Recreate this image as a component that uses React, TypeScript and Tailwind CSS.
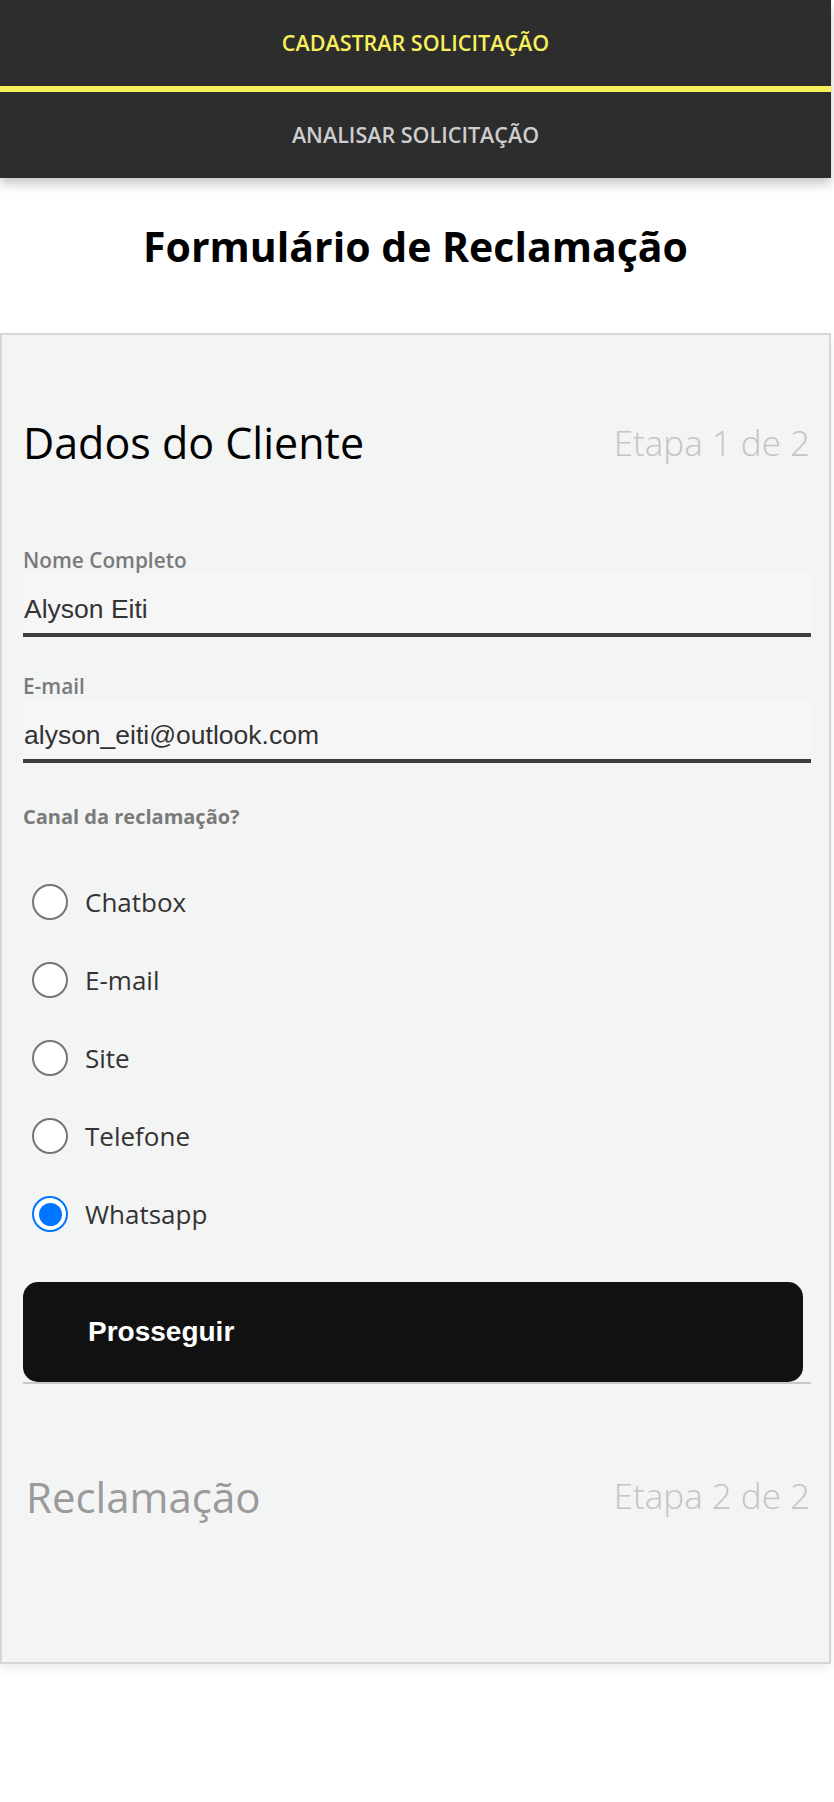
import React, { useState } from 'react';

const canais = ['Chatbox', 'E-mail', 'Site', 'Telefone', 'Whatsapp'];

const sans = { fontFamily: '"Open Sans", "Noto Sans", sans-serif' };
const arial = { fontFamily: '"Liberation Sans", Arial, sans-serif' };

const Radio: React.FC<{ checked: boolean }> = ({ checked }) =>
    checked ? (
        <span className="w-9 h-9 rounded-full border-2 border-[#0075ff] bg-white flex items-center justify-center shrink-0">
            <span className="w-[23px] h-[23px] rounded-full bg-[#0075ff]" />
        </span>
    ) : (
        <span className="w-9 h-9 rounded-full border-2 border-[#767676] bg-white shrink-0" />
    );

export default function App() {
    const [canal, setCanal] = useState('Whatsapp');

    return (
        <div className="w-[831px] bg-white pb-[138px] font-['Open_Sans',sans-serif]">
            <nav className="bg-[#2d2d2d] shadow-[0_6px_10px_rgba(0,0,0,0.22)]">
                <div className="h-[92px] border-b-[6px] border-[#f8f05a] flex items-center justify-center">
                    <span className="text-[21.5px] font-semibold text-[#f8f05a]">CADASTRAR SOLICITAÇÃO</span>
                </div>
                <div className="h-[86px] flex items-center justify-center">
                    <span className="text-[21.5px] font-semibold text-[#cdcdd0]">ANALISAR SOLICITAÇÃO</span>
                </div>
            </nav>

            <h1 className="mt-[43px] text-center text-[41px] leading-[50px] font-bold text-black">Formulário de Reclamação</h1>

            <section className="mt-[62px] border-2 border-[#d6d6d6] bg-[#f3f4f4] shadow-[0_4px_10px_rgba(0,0,0,0.08)] pl-[21px] pr-[19px] pt-[80px] pb-[138px]">
                <div className="h-[56px] flex items-center justify-between">
                    <h2 className="text-[43px] text-black">Dados do Cliente</h2>
                    <span className="text-[35px] font-[350] text-[#c4c4c4]">Etapa 1 de 2</span>
                </div>

                <label className="block mt-[76px] text-[20.8px] leading-[26px] font-semibold text-[#7a7a7a]">Nome Completo</label>
                <input
                    defaultValue="Alyson Eiti"
                    className="block w-[788px] h-[64px] bg-[#f6f6f6] border-b-4 border-[#3d3d3d] px-px pt-[13px] text-[26.5px] text-[#333] outline-none"
                    style={arial}
                />

                <label className="block mt-[36px] text-[20.8px] leading-[26px] font-semibold text-[#7a7a7a]">E-mail</label>
                <input
                    defaultValue="alyson_eiti@outlook.com"
                    className="block w-[788px] h-[64px] bg-[#f6f6f6] border-b-4 border-[#3d3d3d] px-px pt-[13px] text-[26.5px] text-[#333] outline-none"
                    style={arial}
                />

                <p className="mt-[41px] text-[20px] leading-[26px] font-bold text-[#7a7a7a]">Canal da reclamação?</p>

                <div className="mt-[33px]">
                    {canais.map(c => (
                        <div key={c} onClick={() => setCanal(c)} className="h-[78px] flex items-center gap-[17px] pl-[9px] cursor-pointer">
                            <Radio checked={canal === c} />
                            <span className="text-[26px] text-[#333]" style={sans}>{c}</span>
                        </div>
                    ))}
                </div>

                <div className="mt-[29px] w-[788px] border-b-2 border-[#c8c8c8]">
                    <button
                        className="w-[780px] h-[100px] rounded-[15px] bg-[#111111] text-left pl-[65px] text-[28px] font-bold text-white"
                        style={arial}
                    >
                        Prosseguir
                    </button>
                </div>

                <div className="mt-[84px] h-[56px] flex items-center justify-between">
                    <h2 className="pl-[3px] text-[42px] font-medium text-[#9a9a9a]">Reclamação</h2>
                    <span className="text-[35px] font-[350] text-[#c4c4c4]">Etapa 2 de 2</span>
                </div>
            </section>
        </div>
    );
}
